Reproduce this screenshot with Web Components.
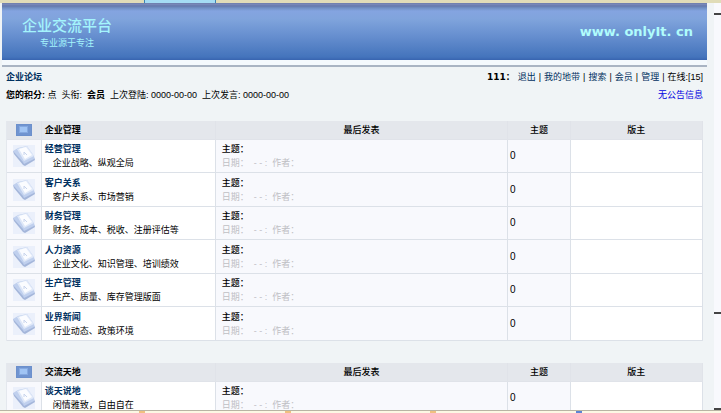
<!DOCTYPE html>
<html lang="zh-CN">
<head>
<meta charset="utf-8">
<title>企业交流平台</title>
<style>
html, body { margin: 0; height: 100%; }
body { font: 9px/14px "Liberation Sans", "Noto Sans CJK SC", sans-serif; color: #000; background: #f0f4f6; overflow: hidden; }
</style>
</head>
<body>
<forum-page>
  <site-banner>
    <span slot="name">企业交流平台</span>
    <span slot="motto">专业源于专注</span>
    <span slot="site">www. onlyIt. cn</span>
  </site-banner>
  <user-bar></user-bar>
  <forum-board heading="企业管理"></forum-board>
  <forum-board heading="交流天地"></forum-board>
</forum-page>
<script>
const define = (name, html, setup) => customElements.define(name, class extends HTMLElement {
  connectedCallback() {
    if (this.shadowRoot) return;
    this.attachShadow({ mode: 'open' }).innerHTML = html;
    if (setup) setup(this, this.shadowRoot);
  }
});

define('forum-page', `
<style>
:host { display: grid; height: 100vh; grid-template: 3px minmax(0, 1fr) 3px / minmax(0, 1fr) 7px; }
.top { grid-column: 1 / -1; display: grid; grid-template-columns: 20fr 10fr 70fr; background: #e0dcb8; }
.top i { grid-column: 2; background: #a4dcf4; border: solid #3c84b4; border-width: 0 1px; }
main { overflow: hidden; display: flow-root; }
.rail { background: #f8f9fd; display: flex; flex-direction: column; padding-top: 10px; }
.rail i { height: 2px; background: #444; flex: none; }
.rail i:nth-child(2) { margin: auto 0 94px; }
.foot { grid-column: 1 / -1; background: #fcf8e4; border-top: 1px solid #b8b4a4; display: flex; justify-content: space-evenly; }
.foot i { width: 6px; height: 2px; background: #f0c080; }
.foot i:nth-child(4) { background: #5c84d4; }
</style>
<div class="top"><i></i></div>
<main><slot></slot></main>
<div class="rail"><i></i><i></i><i></i></div>
<div class="foot"><i></i><i></i><i></i><i></i></div>`);

define('site-banner', `
<style>
:host { display: block; margin: 0 7px 0 2px; background: #f4f9fd; padding-bottom: 5px; border-bottom: 2px solid #a9b4c3; }
header { display: flex; justify-content: space-between; align-items: center; height: 57px; box-sizing: border-box; padding: 4px 14px 0 20px;
  background: linear-gradient(#6474a4 0, #7c8cbc 1px, #6478ac 3px, #7090c4 5px, #84a4e0 8px, #80a4dc 16px, #6890d0 32px, #4474bc 54px, #3864b0 100%); color: #a4f4fc; }
h1 { margin: 0; font-size: 15px; line-height: 18px; font-weight: 500; }
p { margin: 0; padding-left: 18px; line-height: 16px; }
.site { font: bold 13px/18px "DejaVu Sans", sans-serif; color: #b0fcfc; padding-bottom: 4px; }
</style>
<header>
  <div><h1><slot name="name"></slot></h1><p><slot name="motto"></slot></p></div>
  <div class="site"><slot name="site"></slot></div>
</header>`);

define('user-bar', `
<style>
:host { display: block; padding: 1px 11px 17px 6px; }
.row { display: flex; justify-content: space-between; line-height: 18px; white-space: pre; }
a { color: #003060; text-decoration: none; }
a.home { font-weight: bold; }
a.notice { color: #0000e0; }
nav { display: flex; gap: 3px; }
nav b { font-family: "DejaVu Sans", "Noto Sans CJK SC", sans-serif; }
</style>
<div class="row"><a class="home" href="#">企业论坛</a><nav><b>111：</b><a href="#">退出</a><span>|</span><a href="#">我的地带</a><span>|</span><a href="#">搜索</a><span>|</span><a href="#">会员</a><span>|</span><a href="#">管理</a><span>|</span><span>在线:[15]</span></nav></div>
<div class="row"><span><b>您的积分:</b> 点  头衔:  <b>会员</b>  上次登陆: 0000-00-00  上次发言: 0000-00-00</span><a class="notice" href="#">无公告信息</a></div>`);

define('board-icon', `
<style>:host { display: block; width: 16px; height: 12px; margin: auto; } svg { display: block; }</style>
<svg width="16" height="12" viewBox="0 0 16 12"><rect width="16" height="12" fill="#6c90cc"/><rect x="1" y="1" width="14" height="10" fill="#7094d0"/><rect x="3" y="2" width="9" height="7" fill="#84a8e0"/><rect x="4" y="3" width="7" height="5" fill="#a0c4f4"/></svg>`);

define('book-icon', `
<style>:host { display: block; width: 22px; height: 22px; margin: auto; } svg { display: block; }</style>
<svg width="22" height="22" viewBox="0 0 22 22"><rect width="22" height="22" fill="#ebf0fb"/><path d="M0 6 L1 9 L10 20 L12 21 L22 15 L21 12 Z" fill="#a4b6da"/><path d="M0 6 L5 3 L14 1 L21 11 L21 14 L11 19 L10 17 Z" fill="#c0d0ee"/><path d="M4 4 L14 1 L21 11 L11 16 Z" fill="#dfe8f8"/><path d="M6 4 L13 2 L19 10 L12 14 Z" fill="#fbfcff"/><path d="M11 10 L11 7 L14 10" fill="none" stroke="#c8d4ec"/></svg>`);

const boards = {
  '企业管理': [
    ['经营管理', '企业战略、纵观全局'],
    ['客户关系', '客户关系、市场营销'],
    ['财务管理', '财务、成本、税收、注册评估等'],
    ['人力资源', '企业文化、知识管理、培训绩效'],
    ['生产管理', '生产、质量、库存管理版面'],
    ['业界新闻', '行业动态、政策环境']
  ],
  '交流天地': [['谈天说地', '闲情雅致，自由自在']]
};

define('forum-board', `
<style>
:host { display: block; margin: 0 11px 22px 6px; }
table { width: 100%; table-layout: fixed; border-collapse: separate; border-spacing: 0; border-left: 1px solid #e4e8ee; box-sizing: border-box; }
th, td { padding: 0; box-sizing: border-box; border: solid #dce1e8; border-width: 0 1px 1px 0; text-align: left; }
th { height: 19px; background: #e4e7ec; border-color: #e0e3e9; text-align: center; font-weight: 500; }
th.name { font-weight: bold; text-align: left; padding-left: 3px; }
td { height: 34px; background: #f8f9fd; }
tr:nth-child(odd) td { height: 33px; }
td.name, td.mods { background: #fff; }
td.name { padding-left: 3px; }
td.last { padding-left: 6px; }
td.count { padding-left: 2px; font-size: 10px; }
a { display: block; color: #003060; font-weight: bold; text-decoration: none; }
p { margin: 0; padding-left: 8px; white-space: nowrap; }
td.last p { padding: 0; white-space: pre; font-weight: 500; }
td.last p.muted { color: #bfbfc4; font-weight: 400; }
</style>
<table>
<colgroup><col style="width:5%"><col style="width:25%"><col style="width:42%"><col style="width:9%"><col style="width:19%"></colgroup>
<thead><tr><th><board-icon></board-icon></th><th class="name"></th><th>最后发表</th><th>主题</th><th>版主</th></tr></thead>
<tbody></tbody>
</table>`, (host, root) => {
  const heading = host.getAttribute('heading');
  root.querySelector('th.name').textContent = heading;
  root.querySelector('tbody').innerHTML = boards[heading].map(([name, about]) => `<tr>
    <td><book-icon></book-icon></td>
    <td class="name"><a href="#">${name}</a><p>${about}</p></td>
    <td class="last"><p>主题：</p><p class="muted">日期：  - - :  作者：</p></td>
    <td class="count">0</td><td class="mods"></td></tr>`).join('');
});
</script>
</body>
</html>
